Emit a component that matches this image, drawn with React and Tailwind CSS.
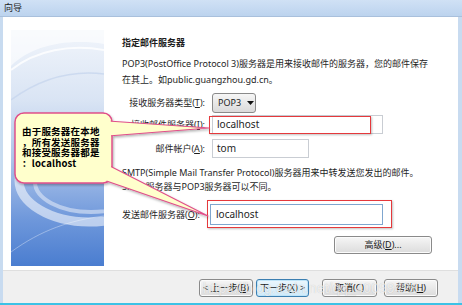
import React from "react";

const FONT = "font-['Noto_Sans','Noto_Sans_CJK_SC',sans-serif]";

function Btn({ children, className = "", focused = false }) {
  return (
    <div
      className={
        "h-[18px] flex items-center justify-center rounded-[3px] border text-[9px] text-[#1a1a1a] whitespace-nowrap " +
        (focused
          ? "border-[#3c7fb1] bg-gradient-to-b from-[#eaf6fd] to-[#d0ebfa] shadow-[inset_0_0_0_1px_#bfe4f8] "
          : "border-[#8a8a8a] bg-gradient-to-b from-[#f6f6f6] to-[#dcdcdc] shadow-[inset_0_0_0_1px_#fbfbfb] ") +
        className
      }
    >
      {children}
    </div>
  );
}

function LeftArt() {
  return (
    <svg width="93" height="236" viewBox="0 0 93 236" className="block">
      <defs>
        <linearGradient id="lg" x1="0" y1="0" x2="0" y2="1">
          <stop offset="0" stopColor="#f1f5fb" />
          <stop offset="0.3" stopColor="#d9e4f4" />
          <stop offset="0.55" stopColor="#aec5ea" />
          <stop offset="0.8" stopColor="#6f98db" />
          <stop offset="1" stopColor="#4a7dd0" />
        </linearGradient>
      </defs>
      <rect width="93" height="236" fill="url(#lg)" />
      <path d="M0 36 C 20 16, 55 8, 93 14 L93 0 L0 0 Z" fill="#ffffff" opacity="0.6" />
      <path d="M0 40 C 25 20, 60 14, 93 20" stroke="#ffffff" strokeWidth="2" fill="none" opacity="0.8" />
      <path d="M0 70 C 30 48, 60 40, 93 44" stroke="#c7d6ee" strokeWidth="1.5" fill="none" opacity="0.8" />
      <ellipse cx="78" cy="150" rx="70" ry="42" fill="none" stroke="#ffffff" strokeWidth="9" opacity="0.55" />
      <ellipse cx="80" cy="152" rx="56" ry="30" fill="none" stroke="#dfe8f7" strokeWidth="4" opacity="0.6" />
      <path d="M0 222 C 30 200, 60 190, 93 186" stroke="#ffffff" strokeWidth="1" fill="none" opacity="0.35" />
    </svg>
  );
}

export default function App() {
  return (
    <div className={"w-[462px] h-[305px] relative overflow-hidden flex flex-col bg-[#c8dbf0] " + FONT}>
      {/* title bar */}
      <div className="h-[17px] flex items-center pl-[4px] text-[9px] text-[#1e1e1e] bg-gradient-to-b from-[#d0e1f5] to-[#bcd3ee] border-b border-[#a9c0dc]">
        向导
      </div>

      <div className="flex-1 flex flex-col mx-[3px] mr-[4px] bg-white">
        <div className="flex-1 flex">
          <div className="ml-[8px] mt-[13px] w-[93px] h-[236px]">
            <LeftArt />
          </div>

          <div className="ml-[18px] flex flex-col text-[9px] text-[#1e1e1e]">
            <div className="mt-[20px] h-[12px] leading-[12px] font-bold">指定邮件服务器</div>
            <div className="mt-[7px] leading-[16px] whitespace-nowrap">
              POP3(PostOffice Protocol 3)服务器是用来接收邮件的服务器，您的邮件保存
              <br />
              在其上。如public.guangzhou.gd.cn。
            </div>

            <div className="mt-[5px] flex items-center h-[20px]">
              <div className="w-[83px] text-right whitespace-nowrap">
                接收服务器类型(<u>T</u>):
              </div>
              <div className="ml-[7px] w-[44px] h-[20px] rounded-[3px] border border-[#8a8a8a] bg-gradient-to-b from-[#f6f6f6] to-[#dadada] flex items-center pl-[5px] gap-[6px] text-[9px]">
                POP3
                <svg width="7" height="4" viewBox="0 0 7 4">
                  <path d="M0 0 L7 0 L3.5 4 Z" fill="#111" />
                </svg>
              </div>
            </div>

            <div className="mt-[2px] flex items-center h-[19px]">
              <div className="w-[83px] text-right whitespace-nowrap">
                接收邮件服务器(<u>I</u>):
              </div>
              <div className="ml-[7px] w-[171px] h-[19px] border border-[#c9cdd3] flex items-center pl-[4px] text-[10px]">
                localhost
              </div>
            </div>

            <div className="mt-[5px] flex items-center h-[19px]">
              <div className="w-[83px] text-right whitespace-nowrap">
                邮件帐户(<u>A</u>):
              </div>
              <div className="ml-[7px] w-[97px] h-[19px] border border-[#c9cdd3] flex items-center pl-[4px] text-[10px]">
                tom
              </div>
            </div>

            <div className="mt-[8px] leading-[14px] whitespace-nowrap">
              SMTP(Simple Mail Transfer Protocol)服务器用来中转发送您发出的邮件。
              <br />
              SMTP服务器与POP3服务器可以不同。
            </div>

            <div className="mt-[10px] flex items-center h-[21px]">
              <div className="w-[81px] whitespace-nowrap">
                发送邮件服务器(<u>O</u>):
              </div>
              <div className="ml-[7px] w-[173px] h-[21px] border border-[#7fa6cf] flex items-center pl-[5px] text-[10px]">
                localhost
              </div>
            </div>

            <div className="mt-[11px] ml-[212px]">
              <Btn className="w-[98px] h-[17px]">
                高级(<u>D</u>)...
              </Btn>
            </div>
          </div>
        </div>

        {/* footer */}
        <div className="h-[33px] bg-[#f0f0f0] border-t border-[#dfdfdf] flex pt-[8px] pl-[196px]">
          <Btn className="w-[54px]">
            &lt; 上一步(<u>B</u>)
          </Btn>
          <Btn focused className="ml-[3px] w-[53px]">
            下一步(<u>X</u>) &gt;
          </Btn>
          <Btn className="ml-[13px] w-[55px]">取消(C)</Btn>
          <Btn className="ml-[7px] w-[54px]">
            帮助(<u>H</u>)
          </Btn>
        </div>
      </div>

      {/* bottom cyan edge */}
      <div className="h-[2px] bg-[#3cc2e6]" />

      {/* red annotation boxes */}
      <div className="absolute left-[209px] top-[116px] w-[162px] h-[18px] border-[1.5px] border-[#e5393c] shadow-[1px_1px_2px_rgba(0,0,0,0.25)]" />
      <div className="absolute left-[207px] top-[200px] w-[185px] h-[28px] border-[1.5px] border-[#e5393c] shadow-[1px_1px_2px_rgba(0,0,0,0.25)]" />

      {/* callout */}
      <svg className="absolute left-0 top-0" width="462" height="305" viewBox="0 0 462 305">
        <defs>
          <filter id="sh" x="-10%" y="-10%" width="130%" height="130%">
            <feDropShadow dx="1" dy="1.5" stdDeviation="1.2" floodColor="#000" floodOpacity="0.3" />
          </filter>
        </defs>
        <g filter="url(#sh)">
          <rect x="15" y="113" width="97" height="70" rx="9" fill="#ffffcc" stroke="#e0508a" strokeWidth="1.5" />
          <polygon points="108,121 209,128 108,136" fill="#ffffcc" stroke="#e0508a" strokeWidth="1.2" strokeLinejoin="round" />
          <polygon points="104,163 208,216 92,176" fill="#ffffcc" stroke="#e0508a" strokeWidth="1.2" strokeLinejoin="round" />
        </g>
        <rect x="16" y="114" width="95" height="68" rx="8.5" fill="#ffffcc" />
      </svg>
      <div className="absolute left-[22px] top-[126px] flex flex-col text-[9.5px] font-semibold text-black whitespace-nowrap font-['Noto_Sans_CJK_SC',sans-serif] tracking-[0.2px]">
        <div className="h-[10.5px] leading-[10.5px]">由于服务器在本地</div>
        <div className="h-[10.5px] leading-[10.5px]">，所有发送服务器</div>
        <div className="h-[10.5px] leading-[10.5px]">和接受服务器都是</div>
        <div className="h-[10.5px] leading-[10.5px]">：localhost</div>
      </div>

      {/* watermark */}
      <div className="absolute left-[203px] top-[279px] text-[14px] leading-[18px] text-white/70 whitespace-nowrap font-['Liberation_Sans',sans-serif] [text-shadow:0_0_1px_rgba(0,0,0,0.2)]">
        https://blog.csdn.net/qq_40099428
      </div>
    </div>
  );
}
